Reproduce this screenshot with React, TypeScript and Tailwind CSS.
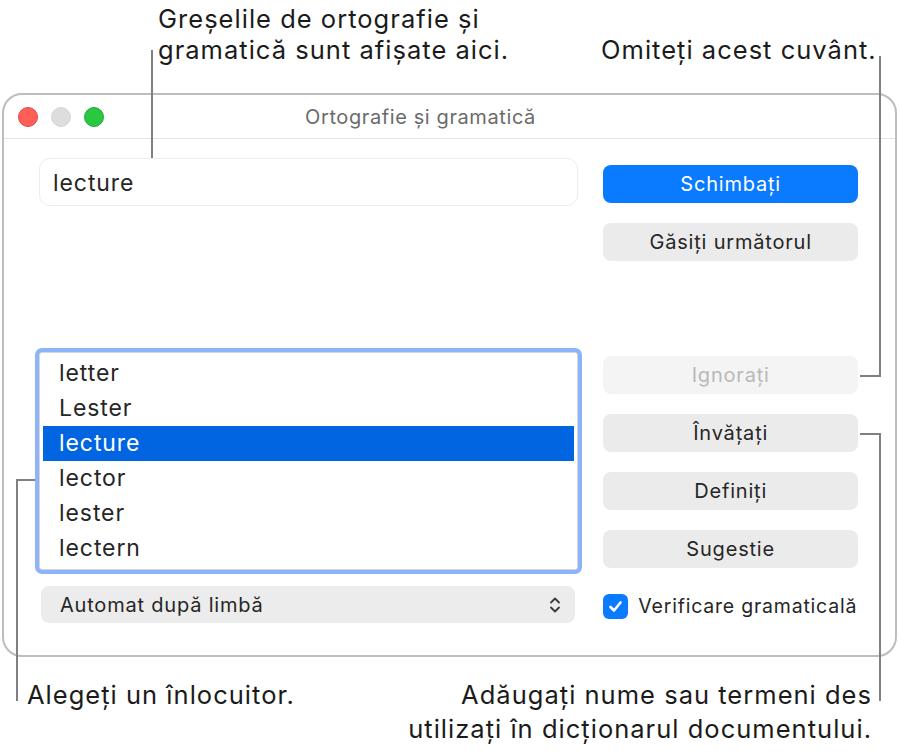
import React from 'react';

const FONT = { fontFamily: 'Inter, "Noto Sans", "Liberation Sans", sans-serif' };

const SUGGESTIONS = ['letter', 'Lester', 'lecture', 'lector', 'lester', 'lectern'];
const SELECTED = 'lecture';

function TrafficLights() {
  return (
    <div className="flex items-center gap-[13px]">
      <span className="h-[20px] w-[20px] rounded-full border border-[#e5454b] bg-[#ff5f57]" />
      <span className="h-[20px] w-[20px] rounded-full border border-[#d6d6d6] bg-[#dddddd]" />
      <span className="h-[20px] w-[20px] rounded-full border border-[#22a83a] bg-[#2ac840]" />
    </div>
  );
}

function SideButton({
  children,
  variant = 'default',
}: {
  children: React.ReactNode;
  variant?: 'default' | 'primary' | 'disabled';
}) {
  const tone =
    variant === 'primary'
      ? 'bg-[#0a7aff] text-white'
      : variant === 'disabled'
        ? 'bg-[#f4f4f4] text-[#b9b9b9]'
        : 'bg-[#ebebeb] text-[#262626]';
  return (
    <button
      type="button"
      className={`flex h-[38px] w-full items-center justify-center rounded-[8px] text-[20px] tracking-[0.04em] ${tone}`}
    >
      {children}
    </button>
  );
}

function Chevrons() {
  return (
    <svg width="12" height="20" viewBox="0 0 12 20" fill="none" aria-hidden>
      <path d="M2 7.5 6 3.5 10 7.5" stroke="#3a3a3a" strokeWidth="1.8" strokeLinecap="round" strokeLinejoin="round" />
      <path d="M2 12.5 6 16.5 10 12.5" stroke="#3a3a3a" strokeWidth="1.8" strokeLinecap="round" strokeLinejoin="round" />
    </svg>
  );
}

function Checkbox() {
  return (
    <span className="flex h-[25px] w-[25px] items-center justify-center rounded-[6px] bg-[#0a7aff]">
      <svg width="17" height="17" viewBox="0 0 17 17" fill="none" aria-hidden>
        <path d="M3.5 9 7 12.5 13.5 4.5" stroke="white" strokeWidth="2.6" strokeLinecap="round" strokeLinejoin="round" />
      </svg>
    </span>
  );
}

function SpellingWindow() {
  return (
    <div className="mx-[2px] h-[564px] overflow-hidden rounded-[20px] border-2 border-[#bdbdbd] bg-white">
      <div className="relative flex h-[44px] items-center border-b border-[#e4e4e4] px-[14px]">
        <TrafficLights />
        <div className="absolute left-0 right-[58px] text-center text-[20px] tracking-[0.03em] text-[#6b6b6b]">
          Ortografie și gramatică
        </div>
      </div>

      <div className="flex gap-[25px] pl-[35px] pr-[37px] pt-[19px]">
        {/* left column */}
        <div className="flex w-[540px] flex-col">
          <div className="flex h-[48px] items-center rounded-[11px] border border-[#ececec] px-[13px] pt-[3px] text-[23px] tracking-[0.04em] text-[#262626]">
            lecture
          </div>

          <div className="mt-[146px] h-[218px] rounded-[3px] border border-[#d6d6d6] bg-white p-[3px] shadow-[0_0_0_4px_#8db4f9]">
            {SUGGESTIONS.map((s) => (
              <div
                key={s}
                className={`flex h-[35px] items-center px-[16px] text-[23px] tracking-[0.04em] ${
                  s === SELECTED ? 'bg-[#0165e1] text-white' : 'text-[#262626]'
                }`}
              >
                {s}
              </div>
            ))}
          </div>

          <div className="ml-[2px] mr-[3px] mt-[16px] flex h-[37px] items-center justify-between rounded-[8px] bg-[#ececec] pl-[19px] pr-[14px] text-[20px] tracking-[0.04em] text-[#262626]">
            <span>Automat după limbă</span>
            <Chevrons />
          </div>
        </div>

        {/* right column */}
        <div className="flex w-[255px] flex-col pt-[7px]">
          <SideButton variant="primary">Schimbați</SideButton>
          <div className="mt-[20px]">
            <SideButton>Găsiți următorul</SideButton>
          </div>
          <div className="mt-[95px] flex flex-col gap-[20px]">
            <SideButton variant="disabled">Ignorați</SideButton>
            <SideButton>Învățați</SideButton>
            <SideButton>Definiți</SideButton>
            <SideButton>Sugestie</SideButton>
          </div>
          <div className="mt-[24px] flex items-center gap-[10px] text-[19.5px] tracking-[0.04em] text-[#262626]">
            <Checkbox />
            <span>Verificare gramaticală</span>
          </div>
        </div>
      </div>
    </div>
  );
}

export default function App() {
  return (
    <div
      className="relative h-[753px] w-[899px] overflow-hidden bg-white text-[#1b1b1b]"
      style={FONT}
    >
      {/* top callouts */}
      <div className="relative h-[93px] text-[25.5px] tracking-[0.04em]">
        <div className="absolute left-[158px] top-[3px] leading-[31px]">
          Greșelile de ortografie și
          <br />
          gramatică sunt afișate aici.
        </div>
        <div className="absolute left-[601px] top-[34px] leading-[31px]">Omiteți acest cuvânt.</div>
      </div>

      <SpellingWindow />

      {/* bottom callouts */}
      <div className="relative text-[25.5px] tracking-[0.04em]">
        <div className="absolute left-[27px] top-[21px] leading-[34px]">Alegeți un înlocuitor.</div>
        <div className="absolute right-[27px] top-[21px] text-right leading-[34px]">
          Adăugați nume sau termeni des
          <br />
          utilizați în dicționarul documentului.
        </div>
      </div>

      {/* leader lines */}
      <span className="absolute left-[151px] top-[50px] h-[108px] w-[2px] bg-[#808080]" />
      <span className="absolute left-[879px] top-[56px] h-[321px] w-[2px] bg-[#808080]" />
      <span className="absolute left-[860px] top-[375px] h-[2px] w-[21px] bg-[#808080]" />
      <span className="absolute left-[879px] top-[433px] h-[268px] w-[2px] bg-[#808080]" />
      <span className="absolute left-[860px] top-[433px] h-[2px] w-[21px] bg-[#808080]" />
      <span className="absolute left-[16px] top-[479px] h-[222px] w-[2px] bg-[#808080]" />
      <span className="absolute left-[16px] top-[479px] h-[2px] w-[19px] bg-[#808080]" />
    </div>
  );
}
